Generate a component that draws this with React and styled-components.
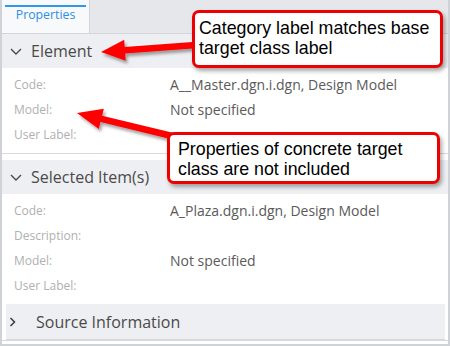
import React from "react";
import styled, { createGlobalStyle } from "styled-components";

const GlobalStyle = createGlobalStyle`
  body {
    margin: 0;
    background: #fff;
    font-family: "Open Sans", "Noto Sans", sans-serif;
  }
`;

const categories = [
  {
    title: "Element",
    rows: [
      { label: "Code:", value: "A__Master.dgn.i.dgn, Design Model" },
      { label: "Model:", value: "Not specified" },
      { label: "User Label:", value: "" },
    ],
  },
  {
    title: "Selected Item(s)",
    rows: [
      { label: "Code:", value: "A_Plaza.dgn.i.dgn, Design Model" },
      { label: "Description:", value: "" },
      { label: "Model:", value: "Not specified" },
      { label: "User Label:", value: "" },
    ],
    nested: "Source Information",
  },
];

// builds an arrow polygon from the tail point to the tip
const arrowPoints = (from, to, shaft, headLen, headWidth) => {
  const dx = to[0] - from[0];
  const dy = to[1] - from[1];
  const len = Math.hypot(dx, dy);
  const ux = dx / len;
  const uy = dy / len;
  const nx = -uy;
  const ny = ux;
  const bx = to[0] - ux * headLen;
  const by = to[1] - uy * headLen;
  const pts = [
    [from[0] + nx * shaft / 2, from[1] + ny * shaft / 2],
    [bx + nx * shaft / 2, by + ny * shaft / 2],
    [bx + nx * headWidth / 2, by + ny * headWidth / 2],
    to,
    [bx - nx * headWidth / 2, by - ny * headWidth / 2],
    [bx - nx * shaft / 2, by - ny * shaft / 2],
    [from[0] - nx * shaft / 2, from[1] - ny * shaft / 2],
  ];
  return pts.map((p) => p.map((v) => v.toFixed(1)).join(",")).join(" ");
};

const ChevronDown = () => (
  <svg width="12" height="7" viewBox="0 0 12 7">
    <polyline points="1,1 6,6 11,1" fill="none" stroke="#4a4a4a" strokeWidth="1.4" />
  </svg>
);

const ChevronRight = () => (
  <svg width="7" height="10" viewBox="0 0 7 10">
    <polyline points="1.5,1 5.5,5 1.5,9" fill="none" stroke="#3a3a3a" strokeWidth="1.5" />
  </svg>
);

const App = () => {
  return (
    <>
      <GlobalStyle />
      <Frame>
        <TabStrip>
          <Tab>
            <TabLabel>Properties</TabLabel>
          </Tab>
        </TabStrip>

        {categories.map((cat, i) => (
          <Category key={cat.title} $last={i === categories.length - 1}>
            <Header>
              <ChevronDown />
              <span>{cat.title}</span>
            </Header>
            <Rows>
              {cat.rows.map((row) => (
                <Row key={row.label}>
                  <Label>{row.label}</Label>
                  <Value>{row.value}</Value>
                </Row>
              ))}
            </Rows>
            {cat.nested && (
              <NestedHeader>
                <ChevronRight />
                <span>{cat.nested}</span>
              </NestedHeader>
            )}
          </Category>
        ))}

        <Arrows width="450" height="346" viewBox="0 0 450 346">
          <defs>
            <filter id="sh" x="-20%" y="-50%" width="140%" height="200%">
              <feDropShadow dx="2" dy="3" stdDeviation="1.6" floodColor="#000" floodOpacity="0.35" />
            </filter>
          </defs>
          <g fill="#ff0000" filter="url(#sh)">
            <polygon points={arrowPoints([196, 45], [101, 52], 6.5, 24, 21)} />
            <polygon points={arrowPoints([172, 136], [77, 113], 6.5, 25, 21)} />
          </g>
        </Arrows>

        <Callout $top={10} $left={192} $width={251} $pad="5px 4px 7px">
          Category label matches base
          <br />
          target class label
        </Callout>
        <Callout $top={132} $left={167} $width={273} $pad="4px 8px 2px">
          Properties of concrete target
          <br />
          class are not included
        </Callout>
      </Frame>
    </>
  );
};

const Frame = styled.div`
  position: relative;
  width: 450px;
  height: 346px;
  box-sizing: border-box;
  border: 2px solid #cfd2d6;
  border-top: none;
  overflow: hidden;
  background: #fff;
`;

const TabStrip = styled.div`
  display: flex;
  height: 33px;
  background: #e6e7ea;
  border-bottom: 1px solid #d3d5d8;
`;

const Tab = styled.div`
  width: 88px;
  padding: 5px 3px 0;
  box-sizing: border-box;
  background: #f8f9fa;
  border-right: 1px solid #d3d5d8;
`;

const TabLabel = styled.div`
  border-top: 2px solid #2e97ee;
  text-align: center;
  font-size: 12.3px;
  line-height: 16px;
  color: #2e8ee6;
`;

const Category = styled.div`
  border-bottom: ${(p) => (p.$last ? "1px solid #d6d8db" : "1px solid #d9dadd")};
  margin-bottom: ${(p) => (p.$last ? "0" : "6px")};
  padding-bottom: ${(p) => (p.$last ? "0" : "6px")};
`;

const Header = styled.div`
  display: flex;
  align-items: center;
  gap: 9px;
  height: 34px;
  padding-left: 8px;
  background: #eeeff2;
  font-size: 16px;
  color: #4a4a4a;
`;

const Rows = styled.div`
  padding-top: 4px;
`;

const Row = styled.div`
  display: grid;
  grid-template-columns: 156px 1fr;
  align-items: center;
  height: 25px;
  padding-left: 12px;
`;

const Label = styled.span`
  font-size: 12px;
  color: #b0b0b0;
`;

const Value = styled.span`
  font-size: 14px;
  color: #5a5a5a;
`;

const NestedHeader = styled.div`
  display: flex;
  align-items: center;
  gap: 20px;
  height: 35px;
  margin: 6px 3px 0 4px;
  padding-left: 3px;
  background: #eeeff2;
  border-bottom: 1px solid #d6d8db;
  font-size: 16px;
  color: #4a4a4a;
`;

const Arrows = styled.svg`
  position: absolute;
  left: -2px;
  top: 0;
  pointer-events: none;
`;

const Callout = styled.div`
  position: absolute;
  top: ${(p) => p.$top}px;
  left: ${(p) => p.$left - 2}px;
  width: ${(p) => p.$width}px;
  box-sizing: border-box;
  padding: ${(p) => p.$pad};
  border: 3px solid #ee0000;
  border-radius: 7px;
  background: #fff;
  box-shadow: 2px 3px 4px rgba(0, 0, 0, 0.35);
  font-family: "Liberation Sans", Arial, sans-serif;
  font-size: 17.8px;
  line-height: 20px;
  color: #000;
  white-space: nowrap;
`;

export default App;
